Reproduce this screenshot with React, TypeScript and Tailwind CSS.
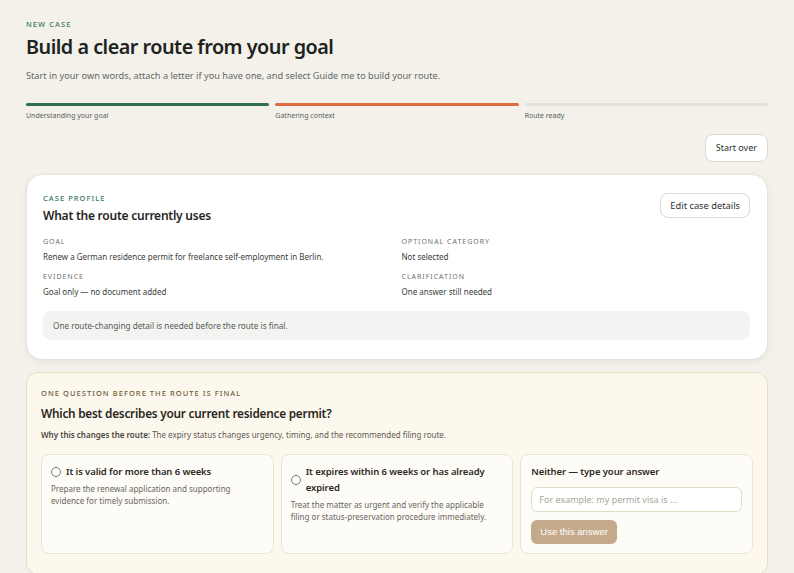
import React from "react";

const font = { fontFamily: '"Noto Sans", "Open Sans", sans-serif' };

function Label({ children }: { children: React.ReactNode }) {
  return (
    <div className="text-[7px] leading-[10px] tracking-[0.14em] uppercase text-[#6c726e]">{children}</div>
  );
}

function Radio() {
  return <span className="inline-block w-[10px] h-[10px] rounded-full border border-[#7a7a76] bg-white shrink-0" />;
}

export default function App() {
  return (
    <div className="min-h-[573px] bg-[#f4f1ea] text-[#1d2421]" style={font}>
      <div className="px-[26px] pt-[19px] pb-6">
        <div className="text-[7.5px] leading-[10px] tracking-[0.14em] font-medium text-[#3b7a5d]">NEW CASE</div>
        <h1 className="mt-[4px] text-[19.8px] leading-[28px] font-semibold tracking-[-0.025em] text-[#1c2320]">
          Build a clear route from your goal
        </h1>
        <p className="mt-[8px] text-[9.2px] leading-[14px] text-[#636864]">
          Start in your own words, attach a letter if you have one, and select Guide me to build your route.
        </p>

        <div className="mt-[20px] grid grid-cols-3 gap-[6px]">
          <div>
            <div className="h-[3px] rounded-full bg-[#2f6f55]" />
            <div className="mt-[5px] text-[7px] leading-[10px] text-[#5a5f5b]">Understanding your goal</div>
          </div>
          <div>
            <div className="h-[3px] rounded-full bg-[#e06a42]" />
            <div className="mt-[5px] text-[7px] leading-[10px] text-[#5a5f5b]">Gathering context</div>
          </div>
          <div>
            <div className="h-[3px] rounded-full bg-[#e3e1dc]" />
            <div className="mt-[5px] text-[7px] leading-[10px] text-[#5a5f5b]">Route ready</div>
          </div>
        </div>

        <div className="mt-[13px] flex justify-end">
          <button className="h-[28px] px-[10px] rounded-[8px] border border-[#dcd9d2] bg-white text-[9px] text-[#2a302d]">
            Start over
          </button>
        </div>

        <div className="mt-[12px] rounded-[16px] border border-[#e4e2dc] bg-white pl-[16px] pr-[17px] pt-[18px] pb-[19px] shadow-[0_2px_6px_rgba(0,0,0,0.06)]">
          <div className="flex items-start justify-between">
            <div>
              <div className="text-[7.5px] leading-[10px] tracking-[0.14em] font-medium text-[#3b7a5d]">CASE PROFILE</div>
              <div className="mt-[4px] text-[12px] leading-[18px] font-semibold tracking-[-0.02em] text-[#1f2623]">What the route currently uses</div>
            </div>
            <button className="h-[25px] px-[9px] rounded-[8px] border border-[#dcd9d2] bg-white text-[9.3px] text-[#2a302d]">
              Edit case details
            </button>
          </div>

          <div className="mt-[12px] grid grid-cols-2 gap-x-[10px] gap-y-[10px]">
            <div>
              <Label>Goal</Label>
              <div className="mt-[4px] text-[8px] leading-[11px] text-[#3a403c]">
                Renew a German residence permit for freelance self-employment in Berlin.
              </div>
            </div>
            <div>
              <Label>Optional category</Label>
              <div className="mt-[4px] text-[8px] leading-[11px] text-[#3a403c]">Not selected</div>
            </div>
            <div>
              <Label>Evidence</Label>
              <div className="mt-[4px] text-[8px] leading-[11px] text-[#3a403c]">Goal only — no document added</div>
            </div>
            <div>
              <Label>Clarification</Label>
              <div className="mt-[4px] text-[8px] leading-[11px] text-[#3a403c]">One answer still needed</div>
            </div>
          </div>

          <div className="mt-[14px] rounded-[8px] bg-[#f3f4f1] px-[10px] py-[9px] text-[8.2px] leading-[11px] text-[#555b57]">
            One route-changing detail is needed before the route is final.
          </div>
        </div>

        <div className="mt-[12px] rounded-[12px] border border-[#e8dcc0] bg-[#fdf8ed] px-[14px] pt-[15px] pb-[20px]">
          <div className="text-[7.5px] leading-[10px] tracking-[0.14em] font-medium text-[#6e5d3c]">
            ONE QUESTION BEFORE THE ROUTE IS FINAL
          </div>
          <div className="mt-[6px] text-[11.8px] leading-[18px] font-semibold tracking-[-0.02em] text-[#2a2620]">
            Which best describes your current residence permit?
          </div>
          <div className="mt-[7px] text-[8px] leading-[12px] text-[#5e5a52]">
            <span className="font-semibold text-[#4a463e]">Why this changes the route:</span> The expiry status changes urgency, timing, and the recommended filing route.
          </div>

          <div className="mt-[13px] grid grid-cols-3 gap-[7px]">
            <div className="rounded-[8px] border border-[#ece4d2] bg-[#fefcf6] px-[9px] pt-[9px] pb-[10px]">
              <div className="flex items-center gap-[5px]">
                <Radio />
                <div className="text-[9.5px] leading-[16px] font-semibold tracking-[-0.01em] text-[#2e2a24]">It is valid for more than 6 weeks</div>
              </div>
              <div className="mt-[3px] text-[8px] leading-[12px] text-[#6a665e]">
                Prepare the renewal application and supporting evidence for timely submission.
              </div>
            </div>
            <div className="rounded-[8px] border border-[#ece4d2] bg-[#fefcf6] px-[9px] pt-[9px] pb-[10px]">
              <div className="flex items-center gap-[5px]">
                <Radio />
                <div className="text-[9.5px] leading-[16px] font-semibold tracking-[-0.01em] text-[#2e2a24]">It expires within 6 weeks or has already expired</div>
              </div>
              <div className="mt-[3px] text-[8px] leading-[12px] text-[#6a665e]">
                Treat the matter as urgent and verify the applicable filing or status-preservation procedure immediately.
              </div>
            </div>
            <div className="rounded-[8px] border border-[#ece4d2] bg-[#fefcf6] px-[10px] pt-[9px] pb-[9px]">
              <div className="text-[9.5px] leading-[16px] font-semibold tracking-[-0.01em] text-[#2e2a24]">Neither — type your answer</div>
              <input
                className="mt-[7px] w-full h-[25px] rounded-[6px] border border-[#e3dccb] bg-white px-[7px] text-[9px] text-[#333] placeholder:text-[#a9a49a] outline-none"
                placeholder="For example: my permit visa is ..."
              />
              <button className="mt-[8px] h-[24px] px-[9px] rounded-[6px] bg-[#c5a98b] text-[9.5px] text-white" style={{ fontFamily: '"Liberation Sans", Arial, sans-serif' }}>
                Use this answer
              </button>
            </div>
          </div>
        </div>
      </div>
    </div>
  );
}
